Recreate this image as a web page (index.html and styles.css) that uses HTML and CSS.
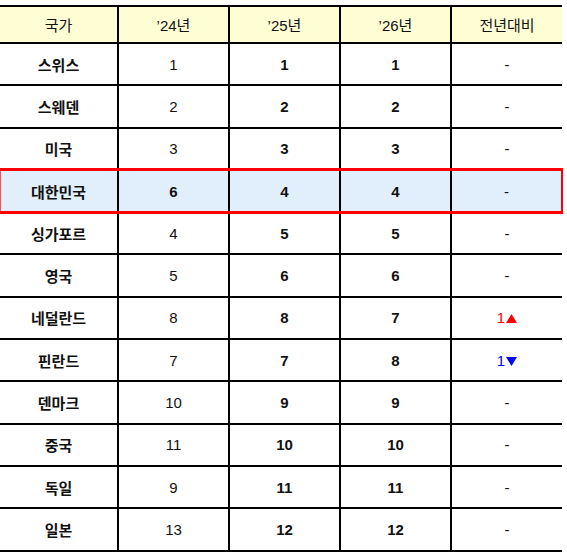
FILE: index.html
```html
<!DOCTYPE html>
<html lang="ko">
<head>
<meta charset="utf-8">
<title>국가별 순위</title>
<link rel="stylesheet" href="styles.css">
</head>
<body>
<div class="wrap">
<table class="rank">
  <colgroup>
    <col class="c-first">
    <col class="c">
    <col class="c">
    <col class="c">
    <col class="c">
  </colgroup>
  <thead>
    <tr class="head">
      <th>국가</th>
      <th>’24년</th>
      <th>’25년</th>
      <th>’26년</th>
      <th>전년대비</th>
    </tr>
  </thead>
  <tbody>
    <tr><td class="name">스위스</td><td>1</td><td class="b">1</td><td class="b">1</td><td>-</td></tr>
    <tr><td class="name">스웨덴</td><td>2</td><td class="b">2</td><td class="b">2</td><td>-</td></tr>
    <tr class="pre-hl"><td class="name">미국</td><td>3</td><td class="b">3</td><td class="b">3</td><td>-</td></tr>
    <tr class="hl"><td class="name">대한민국</td><td class="b">6</td><td class="b">4</td><td class="b">4</td><td>-</td></tr>
    <tr><td class="name">싱가포르</td><td>4</td><td class="b">5</td><td class="b">5</td><td>-</td></tr>
    <tr><td class="name">영국</td><td>5</td><td class="b">6</td><td class="b">6</td><td>-</td></tr>
    <tr><td class="name">네덜란드</td><td>8</td><td class="b">8</td><td class="b">7</td><td class="up">1<svg class="tri" width="11" height="9" viewBox="0 0 11 9"><polygon points="5.5,0 11,9 0,9"/></svg></td></tr>
    <tr><td class="name">핀란드</td><td>7</td><td class="b">7</td><td class="b">8</td><td class="down">1<svg class="tri" width="11" height="9" viewBox="0 0 11 9"><polygon points="0,0 11,0 5.5,9"/></svg></td></tr>
    <tr><td class="name">덴마크</td><td>10</td><td class="b">9</td><td class="b">9</td><td>-</td></tr>
    <tr><td class="name">중국</td><td>11</td><td class="b">10</td><td class="b">10</td><td>-</td></tr>
    <tr><td class="name">독일</td><td>9</td><td class="b">11</td><td class="b">11</td><td>-</td></tr>
    <tr><td class="name">일본</td><td>13</td><td class="b">12</td><td class="b">12</td><td>-</td></tr>
  </tbody>
</table>
</div>
</body>
</html>
```
FILE: styles.css
```css
html, body {
  margin: 0;
  padding: 0;
  background: #ffffff;
}

.wrap {
  padding-top: 5px;
  width: 562px;
}

.rank {
  width: 562px;
  border-collapse: collapse;
  table-layout: fixed;
  font-family: "Liberation Sans", "Noto Sans CJK KR", sans-serif;
  font-size: 15px;
  color: #111111;
}

.c-first { width: 118px; }
.c { width: 111px; }

.rank th,
.rank td {
  padding: 0;
  text-align: center;
  vertical-align: middle;
  border-top: 2px solid #000;
  border-bottom: 2px solid #000;
  border-left: 2px solid #000;
  border-right: 2px solid #000;
}

.rank th:first-child,
.rank td:first-child {
  border-left: none;
}

.rank th:last-child,
.rank td:last-child {
  border-right: none;
}

.head {
  height: 37px;
  background: #fefdd4;
}

.head th {
  font-weight: 400;
}

tbody tr {
  height: 42.3px;
}

.name {
  font-weight: 700;
}

.b {
  font-weight: 700;
}

.pre-hl td {
  border-bottom: 3px solid #ff0000;
}

.hl {
  background: #e1effc;
}

.hl td {
  border-top: 3px solid #ff0000;
  border-bottom: 3px solid #ff0000;
}

.hl td:first-child {
  box-shadow: inset 1px 0 0 #ff5050;
}

.hl td:last-child {
  border-right: 2px solid #ff0000;
}

.up {
  color: #ff0000;
}

.down {
  color: #0000ff;
}

.tri {
  display: inline-block;
  vertical-align: 0;
  margin-left: 1px;
  fill: currentColor;
}
```
